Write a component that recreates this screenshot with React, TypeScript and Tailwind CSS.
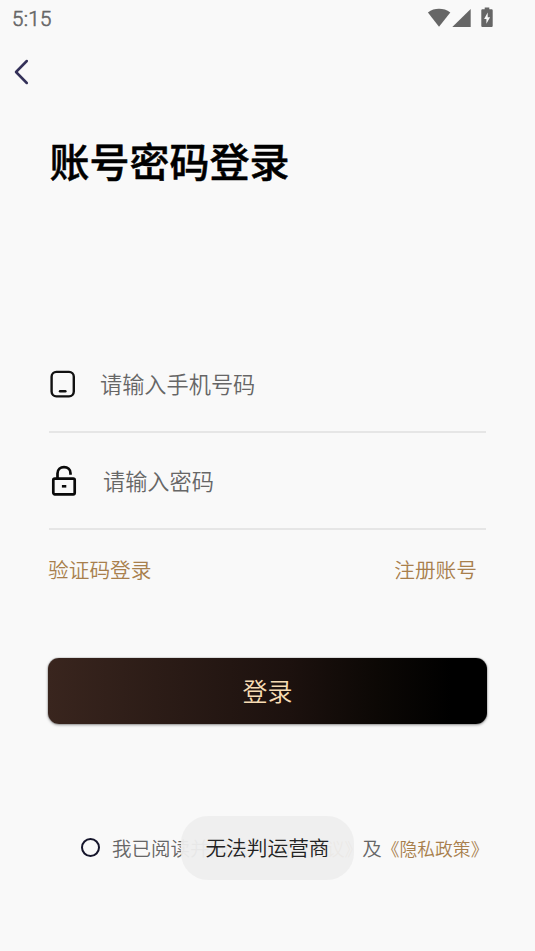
function StatusBar() {
  return (
    <div className="flex h-9 items-center justify-between pl-3 pr-10 text-[#666666]">
      <span className="pt-[2px] font-['Roboto',sans-serif] text-[20.500px] leading-none tracking-[0.3px] [-webkit-text-stroke:0.6px_#666666]">5:15</span>
      <svg width="68" height="22" viewBox="0 0 68 22" fill="currentColor" className="-mt-px" aria-hidden="true">
        {/* Wifi */}
        <path d="M.9 5.500C4.300 2.800 8 1.800 12 1.800s7.900 1 11.300 3.700L12 19.800z" />
        {/* Signal */}
        <path d="M25.300 20.100H43.700V2.100z" />
        {/* Battery */}
        <path
          fillRule="evenodd"
          d="M57.700.5h4.600v1.800h2.100c.8 0 1.300.5 1.300 1.300v15.200c0 .8-.5 1.300-1.300 1.300h-8.800c-.8 0-1.300-.5-1.300-1.300V3.600c0-.8.500-1.300 1.300-1.300h2.100zM60.700 5.500l-3.600 6.500h2.300v4.700l3.700-6.500h-2.400z"
        />
      </svg>
    </div>
  )
}

function PhoneIcon() {
  return (
    <svg width="27" height="28" viewBox="0 0 27 28" fill="none" stroke="#111111" strokeWidth="2.400" strokeLinecap="round" aria-hidden="true">
      <rect x="2.600" y="1.900" width="22.200" height="24.500" rx="4.800" />
      <path d="M11 21.200h5.400" />
    </svg>
  )
}

function UnlockIcon() {
  return (
    <svg width="26" height="32" viewBox="0 0 26 32" fill="none" stroke="#0a0a0a" strokeWidth="2.700" aria-hidden="true">
      <rect x="2.300" y="13.700" width="21.400" height="15.600" rx="1.500" />
      <path d="M6.500 13.500V8.600C6.500 4.500 9.500 2.200 13 2.200c3.700 0 6.500 2.300 6.500 6v1.500" />
      <path d="M10.900 21.300h4.400" strokeWidth="2.600" />
    </svg>
  )
}

export default function App() {
  return (
    <main className="relative flex h-[951px] w-[535px] flex-col overflow-hidden bg-[#f9f9f9] font-['Noto_Sans_CJK_SC',sans-serif] font-[350]">
      <StatusBar />

      <header className="flex h-[72px] items-center pl-[13px]">
        <button aria-label="返回">
          <svg width="18" height="28" viewBox="0 0 18 28" fill="none" stroke="#343159" strokeWidth="2.500" strokeLinecap="round" strokeLinejoin="round">
            <path d="M13.800 3L3 14l10.800 11" />
          </svg>
        </button>
      </header>

      <h1 className="mt-[22px] pl-[49.500px] text-[40px] font-medium leading-[60px] text-black [-webkit-text-stroke:0.5px_#000000]">账号密码登录</h1>

      <form className="mt-[146px] flex flex-col px-12">
        <div className="mx-px flex h-[97px] items-center border-b-2 border-[#e6e6e6]">
          <PhoneIcon />
          <input
            aria-label="手机号码"
            placeholder="请输入手机号码"
            className="mb-[2px] ml-[24px] w-[320px] bg-transparent text-[22.200px] leading-[34px] outline-none placeholder:text-[#666666]"
          />
        </div>
        <div className="mx-px flex h-[97px] items-center border-b-2 border-[#e6e6e6] pl-[2px]">
          <UnlockIcon />
          <input
            aria-label="密码"
            placeholder="请输入密码"
            className="mb-[2px] ml-[26px] w-[320px] bg-transparent text-[22.200px] leading-[34px] outline-none placeholder:text-[#666666]"
          />
        </div>
        <div className="mt-[24px] flex justify-between pr-[10px] text-[20.700px] leading-[31px] text-[#a87f4c]">
          <a>验证码登录</a>
          <a>注册账号</a>
        </div>
        <button
          type="button"
          className="mt-[73px] h-[66px] rounded-[11px] bg-[linear-gradient(90deg,#39251e_0%,#1c110e_55%,#0c0805_75%,#000000_92%)] text-[25px] text-[#f7dcb4] shadow-[0_0_1px_rgba(0,0,0,0.7),0_1px_3px_rgba(0,0,0,0.4)]"
        >
          登录
        </button>
      </form>

      <div className="mt-[107px] flex items-center pl-[81px] text-[19.500px] leading-[32px] whitespace-nowrap text-[#666666]">
        <span className="mr-[12px] size-[19px] shrink-0 rounded-full border-2 border-[#15152b]" />
        <div className="flex items-center pt-px">
          <span>我已阅读并同意</span>
          <span className="ml-[7px] text-[17.800px] text-[#a87f4c]">《用户协议》</span>
          <span>及</span>
          <span className="text-[17.800px] text-[#a87f4c]">《隐私政策》</span>
        </div>
      </div>

      {/* Toast over the agreement row */}
      <div className="absolute top-[816px] left-[181px] flex h-[64px] w-[173px] items-center justify-center rounded-[27px] bg-[#eeeeee]/95 text-[20.700px] whitespace-nowrap text-[#222222]">
        无法判运营商
      </div>
    </main>
  )
}
